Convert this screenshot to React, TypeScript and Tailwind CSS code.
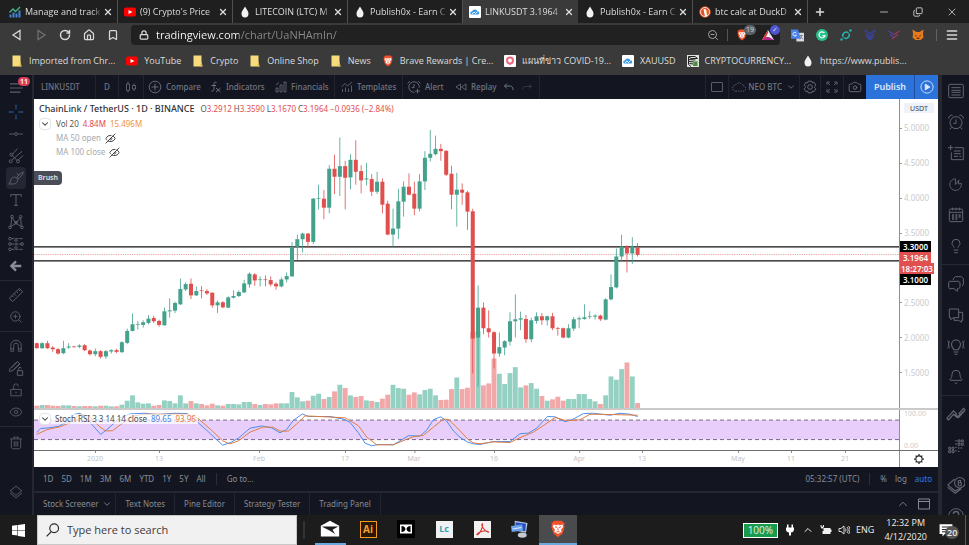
import type { ReactNode } from "react";
import {
  Bell,
  Bookmark,
  Camera,
  ChevronDown,
  ChevronUp,
  Copy,
  Eye,
  EyeOff,
  Home,
  Lightbulb,
  Lock,
  Menu,
  Minus,
  Plus,
  RotateCw,
  X,
  ZoomIn,
  ZoomOut,
} from "lucide-react";

interface IconProps {
  children: ReactNode;
  className?: string;
}

// 24 unit outline icon, coloured by the text colour around it
const Line = ({ children, className = "size-4" }: IconProps) => (
  <svg
    viewBox="0 0 24 24"
    fill="none"
    stroke="currentColor"
    strokeWidth="1.5"
    aria-hidden="true"
    className={`shrink-0 ${className}`}
  >
    {children}
  </svg>
);

const Art = ({ children, className = "size-3" }: IconProps) => (
  <svg viewBox="0 0 24 24" aria-hidden="true" className={`shrink-0 ${className}`}>
    {children}
  </svg>
);

const YouTubeIcon = () => (
  <Art>
    <rect x="0" y="3" width="24" height="18" rx="4" fill="#f00" />
    <path d="M9 8l8 4-8 4z" fill="#fff" />
  </Art>
);

const DropIcon = () => (
  <Art>
    <path d="M12 1c3 6 7 9 7 14a7 8 0 0 1-14 0c0-5 4-8 7-14z" fill="#f2f2f2" />
  </Art>
);

const CloudIcon = () => (
  <Art>
    <rect width="24" height="24" rx="2" fill="#fff" />
    <path
      d="M5 17a3 3 0 0 1 1-6 6 6 0 0 1 11-1 4 4 0 0 1 2 7z"
      fill="#3b9ae8"
    />
    <path d="M6 16l4-4 3 3 4-4" stroke="#fff" strokeWidth="1.8" fill="none" />
  </Art>
);

const FolderIcon = () => (
  <Art>
    <path d="M3 1h16v12l2 10H3z" fill="#f7dc7d" />
    <path d="M19 13l2 10h-5z" fill="#d9b84e" />
  </Art>
);

const BraveIcon = ({ className = "size-3" }: { className?: string }) => (
  <Art className={className}>
    <path
      d="M7 1h10l2 2 2 1-1 3 1 2-3 9-6 5-6-5-3-9 1-2-1-3 2-1z"
      fill="#f4502a"
    />
    <path
      d="M6 6l4 1 2-1 2 1 4-1 1 3-3 4 1 3-3 1-2 2-2-2-3-1 1-3-3-4z"
      fill="#fff"
    />
    <path d="M8 9l3 1M16 9l-3 1M12 11v3M10 15l2 1 2-1" stroke="#f4502a" strokeWidth="1.3" fill="none" />
  </Art>
);

const ChartIcon = () => (
  <Art>
    <path d="M1 17h4v6H1zM7 13h4v10H7zM13 15h4v8h-4zM19 9h4v14h-4z" fill="#3f86d8" />
    <path d="M1 13l7-7 5 5 9-9" stroke="#42b883" strokeWidth="2.5" fill="none" />
  </Art>
);

const DuckIcon = () => (
  <Art>
    <circle cx="12" cy="12" r="11.5" fill="#e0532c" />
    <circle cx="12" cy="12" r="9" fill="none" stroke="#fff" strokeWidth="1.5" />
    <path d="M9 6c4-1 7 2 6 6l1 8-4 1z" fill="#fff" />
    <path d="M13 11l5 1-4 2z" fill="#fdd20a" />
  </Art>
);

const tabs = [
  { title: "Manage and track", icon: <ChartIcon /> },
  { title: "(9) Crypto's Price", icon: <YouTubeIcon /> },
  { title: "LITECOIN (LTC) M", icon: <DropIcon /> },
  { title: "Publish0x - Earn C", icon: <DropIcon /> },
  { title: "LINKUSDT 3.1964", icon: <CloudIcon />, active: true },
  { title: "Publish0x - Earn C", icon: <DropIcon /> },
  { title: "btc calc at DuckD", icon: <DuckIcon /> },
];

const TabBar = () => (
  <header className="flex h-[23px] shrink-0 items-stretch bg-[#1f1f1f] pl-[3px] text-[#dedede]">
    {tabs.map((tab, i) => (
      <div
        key={i}
        className={`flex w-[115px] items-center pr-1 pl-1.5 ${
          tab.active ? "bg-[#3a3a3a]" : "border-r border-[#505050]"
        }`}
      >
        {tab.icon}
        <span className="ml-1 min-w-0 flex-1 mask-r-from-85% text-[9px] whitespace-nowrap">
          {tab.title}
        </span>
        <button aria-label="Close tab">
          <X className="size-2.5" strokeWidth={3} />
        </button>
      </div>
    ))}
    <button aria-label="New tab" className="px-1.5">
      <Plus className="size-3" strokeWidth={3} />
    </button>
    <div className="ml-auto flex items-center gap-[23px] pr-[11px]">
      <button aria-label="Minimize">
        <Minus className="size-3" strokeWidth={1.5} />
      </button>
      <button aria-label="Restore">
        <Copy className="size-2.5 -scale-x-100 rotate-180" strokeWidth={2} />
      </button>
      <button aria-label="Close">
        <X className="size-3" strokeWidth={1.5} />
      </button>
    </div>
  </header>
);

const AddressBar = () => (
  <div className="flex h-6 shrink-0 items-center bg-[#3a3a3a] text-[#d8d8d8]">
    <div className="flex w-[131px] items-center gap-3 pl-[11px]">
      <button aria-label="Back">
        <Line className="size-3">
          <path d="M18 3v18L4 12z" strokeWidth="2.5" />
        </Line>
      </button>
      <button aria-label="Forward" className="text-[#707070]">
        <Line className="size-3">
          <path d="M6 3v18l14-9z" strokeWidth="2.5" />
        </Line>
      </button>
      <button aria-label="Reload">
        <RotateCw className="size-3" strokeWidth={3} />
      </button>
      <button aria-label="Home">
        <Home className="size-3" strokeWidth={2.5} />
      </button>
      <button aria-label="Bookmark this page">
        <Bookmark className="size-3" strokeWidth={2.5} />
      </button>
    </div>
    <div className="flex h-5 min-w-0 flex-1 items-center rounded-sm bg-[#212121] pl-2">
      <Lock className="size-2.5 shrink-0" strokeWidth={3} />
      <input
        aria-label="Address"
        defaultValue="tradingview.com/chart/UaNHAmIn/"
        className="ml-[7px] min-w-0 flex-1 bg-[linear-gradient(to_right,#ffffff_83px,#8c8c8c_83px)] bg-clip-text text-[11px] text-transparent outline-none"
      />
      <button aria-label="Zoom">
        <ZoomOut className="size-3 text-[#a0a0a0]" />
      </button>
      <span className="mx-2 h-3 w-px bg-[#555]" />
      <button aria-label="Brave shields" className="relative flex w-[26px] items-center">
        <BraveIcon />
        <span className="absolute top-[-4px] left-2 rounded-full bg-[#5c6068] px-0.5 text-[7px] leading-[10px]">
          19
        </span>
      </button>
      <button aria-label="Brave rewards" className="relative flex w-[18px] items-center">
        <Art>
          <path d="M12 2l12 20H0z" fill="#e8e4ee" />
          <path d="M12 2L0 22l12-6z" fill="#e5342a" />
          <path d="M0 22h24l-12-7z" fill="#b0248c" />
          <path d="M12 8l4 8H8z" fill="#fff" />
        </Art>
        <span className="absolute top-[-4px] left-2 size-2.5 rounded-full bg-[#4c54d2] text-[7px] leading-[10px]">
          ✓
        </span>
      </button>
    </div>
    <div className="flex items-center gap-3 pr-2.5 pl-[11px]">
      <button aria-label="Translate">
        <Art className="size-[13px]">
          <rect x="10" y="7" width="14" height="16" fill="#d8dce2" />
          <path d="M0 1h13l5 17H0z" fill="#4a80e8" />
          <path d="M10 7.500a3.500 3.500 0 1 0 0 4H7" stroke="#fff" strokeWidth="1.500" fill="none" />
          <path d="M16 12h6M19 11c0 4-1 6-3 8M18 14l4 5" stroke="#667" strokeWidth="1.300" fill="none" />
        </Art>
      </button>
      <button aria-label="Grammar">
        <Art>
          <circle cx="12" cy="12" r="12" fill="#27c08a" />
          <path d="M17 8a6 6 0 1 0 1 5h-5" stroke="#fff" strokeWidth="2.500" fill="none" />
        </Art>
      </button>
      <button aria-label="Wallet">
        <Art>
          <path d="M6 16a7 7 0 0 1 11-8M18 9a7 7 0 0 1-11 8" stroke="#2ab0ac" strokeWidth="3" fill="none" />
          <circle cx="21" cy="3" r="2.500" fill="#2ab0ac" />
          <circle cx="3" cy="21" r="2.500" fill="#2ab0ac" />
        </Art>
      </button>
      <button aria-label="Blue wallet">
        <Art>
          <path d="M1 2l11 8 11-8M3 9l9 7 9-7M5 15l7 6 7-6" stroke="#3a43a8" strokeWidth="2.800" fill="none" />
        </Art>
      </button>
      <button aria-label="Pink wallet">
        <Art>
          <path d="M1 4l11 7M4 11l8 6" stroke="#4648a5" strokeWidth="2.500" fill="none" />
          <path d="M23 4l-11 7M20 11l-8 6-4 3" stroke="#a43560" strokeWidth="2.500" fill="none" />
        </Art>
      </button>
      <button aria-label="Fox wallet">
        <Art>
          <path d="M1 1l8 5h6l8-5-1 9 1 7-6 5H7l-6-5 1-7z" fill="#e87a1e" />
          <path d="M5 12l4 1v3zM19 12l-4 1v3zM9 20h6l-1-3h-4z" fill="#5b3216" />
        </Art>
      </button>
      <span className="-mr-1 h-3 w-px bg-[#606060]" />
      <button aria-label="Menu">
        <Menu className="size-3.5" strokeWidth={2.5} />
      </button>
    </div>
  </div>
);

const bookmarks = [
  { label: "Imported from Chr...", icon: <FolderIcon /> },
  { label: "YouTube", icon: <YouTubeIcon /> },
  { label: "Crypto", icon: <FolderIcon /> },
  { label: "Online Shop", icon: <FolderIcon /> },
  { label: "News", icon: <FolderIcon /> },
  { label: "Brave Rewards | Cre...", icon: <BraveIcon /> },
  {
    label: "แผนที่ข่าว COVID-19...",
    icon: (
      <Art>
        <rect width="24" height="24" rx="2" fill="#fff" />
        <circle cx="12" cy="11" r="6" fill="none" stroke="#ea6a84" strokeWidth="4" />
        <path d="M9 16l3 5 3-5z" fill="#ea6a84" />
      </Art>
    ),
  },
  { label: "XAUUSD", icon: <CloudIcon /> },
  {
    label: "CRYPTOCURRENCY...",
    icon: (
      <Art>
        <rect width="24" height="24" fill="#dfe5dc" />
        <path d="M3 3h13l5 4H8zM3 9l14 1M4 13l11 1M5 17l8 1M3 4v15l5 4" stroke="#222" strokeWidth="2" fill="none" />
        <path d="M14 14l7-2v10h-9z" fill="#4c8a3f" />
      </Art>
    ),
  },
  { label: "https://www.publis...", icon: <DropIcon /> },
];

const BookmarksBar = () => (
  <nav className="flex h-7 shrink-0 items-center gap-[11px] bg-[#3a3a3a] px-[11px] text-[9px] whitespace-nowrap text-[#dcdcdc]">
    {bookmarks.map((b) => (
      <a key={b.label} href="#" className="flex items-center gap-1.5">
        {b.icon}
        {b.label}
      </a>
    ))}
  </nav>
);

const Rule = () => <span className="w-px self-stretch bg-[#22252f]" />;

const ChartToolbar = () => (
  <div className="flex h-6 shrink-0 items-center bg-[#131621] text-[8px] font-medium whitespace-nowrap text-[#71757f]">
    <button className="w-[61px] pl-[7px] text-left">LINKUSDT</button>
    <Rule />
    <button className="w-[22px]">D</button>
    <Rule />
    <button aria-label="Candles" className="flex w-6 justify-center">
      <Line className="size-3">
        <path d="M3 6h6v13H3zM6 1v5M6 19v4M15 9h6v7h-6zM18 5v4M18 16v4" />
      </Line>
    </button>
    <Rule />
    <button className="flex w-[62px] items-center gap-1 pl-1">
      <Line className="size-3.5">
        <circle cx="12" cy="12" r="10" />
        <path d="M12 6v12M6 12h12" />
      </Line>
      Compare
    </button>
    <button className="flex w-[65px] items-center gap-1 pl-1">
      <Line className="size-3">
        <path d="M13 3c-5-2-5 2-5 8s0 10-5 9M3 9h9M12 14l9 8M21 14l-9 8" strokeWidth="2" />
      </Line>
      Indicators
    </button>
    <button className="flex w-[63px] items-center gap-1 pl-1">
      <Line className="size-3">
        <path d="M2 14h4v8H2zM10 8h4v14h-4zM18 2h4v20h-4zM2 8l6-5" />
      </Line>
      Financials
    </button>
    <Rule />
    <button className="flex w-[67px] items-center gap-1 pl-1.5">
      <Line className="size-3">
        <path d="M1 12l7-7 5 5 9-8M3 22v-6M9 22v-9M15 22v-7M21 22V9" />
      </Line>
      Templates
    </button>
    <Rule />
    <button className="flex w-12 items-center gap-1 pl-1">
      <Line className="size-3.5">
        <path d="M13 21a9 9 0 1 1 8-8M12 7v6H8M1 6l4-4M19 2l4 4M18 15v8M14 19h8" />
      </Line>
      Alert
    </button>
    <button className="flex w-12 items-center gap-1 pl-1">
      <Line className="size-3">
        <path d="M11 6v12l-9-6zM22 6v12l-9-6z" />
      </Line>
      Replay
    </button>
    <button aria-label="Undo" className="ml-1">
      <Line className="size-3">
        <path d="M8 5L3 10l5 5M3 10h11c4 0 6 3 6 8" strokeWidth="2" />
      </Line>
    </button>
    <button aria-label="Redo" className="mx-1.5 text-[#343843]">
      <Line className="size-3">
        <path d="M16 7l5 4-5 4M21 11H9c-4 0-6 2-6 5" strokeWidth="2" />
      </Line>
    </button>
    <Rule />
    <div className="ml-auto flex items-center self-stretch">
      <Rule />
      <button aria-label="Layout" className="px-[5px]">
        <Line className="size-3">
          <rect x="1" y="3" width="22" height="18" rx="1" />
        </Line>
      </button>
      <Rule />
      <button className="flex items-center gap-0.5 px-[3px]">
        <Line className="size-3.5">
          <path d="M6 19a5 5 0 0 1 0-10 7 7 0 0 1 13 1 4 4 0 0 1 0 9z" strokeDasharray="2 2" />
        </Line>
        NEO BTC
        <ChevronDown className="ml-0.5 size-2.5" />
      </button>
      <Rule />
      <button aria-label="Settings" className="px-[3px]">
        <Line className="size-3.5">
          <path d="M9 2h6l1 3 3-1 3 5-2 2v2l2 2-3 5-3-1-1 3H9l-1-3-3 1-3-5 2-2v-2L2 9l3-5 3 1z" strokeLinejoin="round" />
          <circle cx="12" cy="12" r="4" />
        </Line>
      </button>
      <Rule />
      <button aria-label="Fullscreen" className="px-[5px]">
        <Line className="size-3">
          <path d="M2 8V2h6M16 2h6v6M22 16v6h-6M8 22H2v-6M3 3l5 5M21 3l-5 5M21 21l-5-5M3 21l5-5" />
        </Line>
      </button>
      <Rule />
      <button aria-label="Snapshot" className="px-1">
        <Camera className="size-3.5" strokeWidth={1.5} />
      </button>
      <button className="flex w-12 items-center justify-center self-stretch bg-[#2b72da] text-[9px] font-semibold text-[#dfe9fa]">
        Publish
      </button>
      <button
        aria-label="Go live"
        className="flex w-6 items-center justify-center self-stretch border-l border-[#1d4f9c] bg-[#2b72da] text-[#dfe9fa]"
      >
        <Line className="size-3.5">
          <circle cx="12" cy="12" r="10.5" />
          <path d="M9 7l8 5-8 5z" fill="currentColor" />
        </Line>
      </button>
    </div>
  </div>
);

const drawingTools = [
  {
    name: "Cross",
    icon: (
      <Line className="size-4 text-[#274b86]">
        <path d="M12 1v7M12 16v7M1 12h7M16 12h7" strokeWidth="2" />
      </Line>
    ),
  },
  {
    name: "Trend line",
    icon: (
      <Line className="size-3.5">
        <path d="M0 12h9M15 12h9" />
        <circle cx="12" cy="12" r="2.5" />
      </Line>
    ),
  },
  {
    name: "Pitchfork",
    icon: (
      <Line>
        <path d="M6 18L21 5M6 10L14 1M15 18L23 11M6 11l8 8" />
        <circle cx="4" cy="20" r="2.2" />
        <circle cx="5" cy="10" r="2.2" />
        <circle cx="15" cy="20" r="2.2" />
      </Line>
    ),
  },
  {
    name: "Brush",
    active: true,
    icon: (
      <Line>
        <path d="M1 21c3-1 2-5 4-8s7-3 9 0-1 8-6 8zM13 12c2-4 6-8 10-9-1 4-4 8-9 11M13 5l4 3" />
      </Line>
    ),
  },
  {
    name: "Text",
    icon: (
      <Line>
        <path d="M4 7V4h16v3M12 4v16M9 20h6" />
      </Line>
    ),
  },
  {
    name: "Patterns",
    icon: (
      <Line>
        <path d="M4 19L6 5l6 9 7-9 1 14-8-5-8 5" />
        <circle cx="6" cy="4" r="2" />
        <circle cx="19" cy="4" r="2" />
        <circle cx="3" cy="20" r="2" />
        <circle cx="21" cy="20" r="2" />
        <circle cx="12" cy="13" r="2" />
      </Line>
    ),
  },
  {
    name: "Forecast",
    icon: (
      <Line>
        <path d="M5 4h17M5 20h17M5 12h15M12 5v14M9 8l3-3 3 3M9 16l3 3 3-3" strokeDasharray="5 1" />
        <circle cx="3" cy="4" r="2" />
        <circle cx="3" cy="12" r="2" />
        <circle cx="3" cy="20" r="2" />
        <circle cx="21" cy="12" r="2" />
      </Line>
    ),
  },
  {
    name: "Arrow",
    icon: (
      <Line className="size-3.5 text-[#8b8e98]">
        <path d="M12 4l-8 8 8 8M4 12h17" strokeWidth="4" />
      </Line>
    ),
  },
];

const viewTools = [
  {
    name: "Measure",
    icon: (
      <Line>
        <path d="M2 17L17 2l5 5L7 22zM6 13l2 2M9 10l3 3M13 7l2 2M16 4l2 2" />
      </Line>
    ),
  },
  { name: "Zoom in", icon: <ZoomIn className="size-3.5" strokeWidth={1.5} /> },
];

const lockTools = [
  {
    name: "Magnet",
    icon: (
      <Line className="size-3.5">
        <path d="M3 21V11a9 9 0 0 1 18 0v10h-5V11a4 4 0 0 0-8 0v10zM3 17h5M16 17h5" />
      </Line>
    ),
  },
  {
    name: "Stay in drawing mode",
    icon: (
      <Line>
        <path d="M2 17l1-4L14 2l4 4L8 15l-4 2zM5 12l9-9M8 15l9-9M14 16h8v7h-8zM16 16v-3a2 2 0 0 1 4 0" />
      </Line>
    ),
  },
  {
    name: "Lock drawings",
    icon: (
      <Line className="size-3.5">
        <path d="M3 11h18v11H3zM8 11V6a4 4 0 0 1 8-1v1M12 15v3" />
      </Line>
    ),
  },
  { name: "Hide drawings", icon: <Eye className="size-3.5" strokeWidth={1.5} /> },
];

interface Tool {
  name: string;
  icon: ReactNode;
  active?: boolean;
}

const ToolGroup = ({ tools }: { tools: Tool[] }) => (
  <div className="flex flex-col">
    {tools.map((t) => (
      <div key={t.name} className="relative">
        <button
          aria-label={t.name}
          className={`mx-1.5 flex h-[22px] w-5 items-center justify-center rounded-sm ${
            t.active ? "bg-[#242733]" : ""
          }`}
        >
          {t.icon}
        </button>
        {t.active && (
          <span className="absolute top-1 left-[34px] z-10 rounded-r-sm bg-[#4a4d55] px-1 text-[7px] leading-[14px] font-semibold text-[#e2e2e4]">
            {t.name}
          </span>
        )}
      </div>
    ))}
  </div>
);

const Divider = () => <hr className="my-[3px] border-[#272a34]" />;

const LeftBar = () => (
  <aside className="flex w-[34px] shrink-0 flex-col border-r-2 border-[#252731] bg-[#131621] text-[#5c606b]">
    <button aria-label="Main menu" className="relative flex h-[26px] items-center pl-2.5">
      <Line className="size-3.5">
        <path d="M0 5h20M0 12h22M0 19h18" strokeWidth="2" />
      </Line>
      <span className="absolute top-0.5 left-[18px] rounded-full bg-[#dc3d5c] px-0.5 text-[7px] leading-[9px] font-semibold text-white">
        11
      </span>
    </button>
    <ToolGroup tools={drawingTools} />
    <Divider />
    <ToolGroup tools={viewTools} />
    <Divider />
    <ToolGroup tools={lockTools} />
    <Divider />
    <button aria-label="Remove drawings" className="mt-0.5 flex h-[22px] w-8 items-center justify-center">
      <Line className="size-3.5">
        <path d="M2 5h20M8 5V2h8v3M4 5v15l2 2h12l2-2V5M9 9v9M12 9v9M15 9v9" />
      </Line>
    </button>
    <button aria-label="Object tree" className="mt-auto mb-3 flex h-[22px] w-8 items-center justify-center">
      <Line className="size-3.5">
        <path d="M12 2l10 8-10 8-10-8zM2 14l10 8 10-8" />
      </Line>
    </button>
  </aside>
);

const railTop = [
  {
    name: "Watchlist",
    icon: (
      <Line>
        <rect x="1" y="2" width="22" height="20" rx="2" />
        <path d="M5 7h14M5 11h14M5 14h14M5 18h14" />
      </Line>
    ),
  },
  {
    name: "Alerts",
    icon: (
      <Line>
        <circle cx="12" cy="13" r="9" />
        <path d="M12 8v6H8M1 7c0-4 3-6 6-5M23 7c0-4-3-6-6-5M5 20l-2 3M19 20l2 3" />
      </Line>
    ),
  },
  {
    name: "News",
    icon: (
      <Line>
        <path d="M10 4h13v18H5V11M9 9h10M9 13h10M9 17h6M17 17h3M4 0v8M0 4h8" />
      </Line>
    ),
  },
  {
    name: "Hotlists",
    icon: (
      <Line className="size-3.5">
        <path d="M11 3a10 10 0 1 0 10 8l-5 1 1-7-6 8z" />
      </Line>
    ),
  },
  {
    name: "Calendar",
    icon: (
      <Line>
        <rect x="2" y="3" width="20" height="19" rx="2" />
        <path d="M2 8h20M7 1v4M12 1v4M17 1v4" />
        <path d="M6 12h3M11 12h3M16 12h3M6 15h3M11 15h3M16 15h3M6 18h3M11 18h3" strokeWidth="2" />
      </Line>
    ),
  },
  { name: "Ideas", icon: <Lightbulb className="size-4" strokeWidth={1.5} /> },
];

const railMiddle = [
  {
    name: "Public chats",
    icon: (
      <Line>
        <path d="M8 6V4l3-3h9l3 3v9l-2 2M2 8h14l2 2v7l-2 2h-2v4l-5-4H2l-1-2v-7z" />
      </Line>
    ),
  },
  {
    name: "Private chats",
    icon: (
      <Line>
        <path d="M2 3h14v13H8l-4 3v-3H2zM16 8h6v12h-2v3l-4-3h-7v-4" />
      </Line>
    ),
  },
  {
    name: "Ideas stream",
    icon: (
      <Line className="size-[18px]">
        <path d="M9 17c0-2-3-3-3-7a6 6 0 0 1 12 0c0 4-3 5-3 7zM9 20h6M10 23h4M3 5c-1 3-1 7 0 10M0 4c-1 4-1 9 0 12M21 5c1 3 1 7 0 10M24 4c1 4 1 9 0 12" />
      </Line>
    ),
  },
  { name: "Notifications", icon: <Bell className="size-4" strokeWidth={1.5} /> },
];

const railBottom = [
  {
    name: "Order panel",
    icon: (
      <Line className="size-5">
        <path d="M1 16l8-9 4 4M3 18l6-7 4 4 10-9M11 11l4 4 8-9M15 15l-2-2M1 16l2 2M23 6l-2-2-6 7" strokeWidth="1.5" />
      </Line>
    ),
  },
  {
    name: "Depth of market",
    icon: (
      <Line>
        <path d="M15 3h3v3h-3zM20 3h3v3h-3zM15 8h3v3h-3zM20 8h3v3h-3zM1 14h3v3H1zM6 14h3v3H6zM1 19h3v3H1zM6 19h3v3H6z" />
        <path d="M12 3v20" strokeWidth="2" strokeDasharray="2 3" />
        <path d="M15 15h8M15 20h4" strokeWidth="2" strokeDasharray="2 2" />
      </Line>
    ),
  },
];

const railHelp = [
  {
    name: "Crypto screener",
    icon: (
      <Line className="size-[18px]">
        <circle cx="17" cy="9" r="7" />
        <path d="M10 4L1 12l10 8 7-4M1 15l10 8 8-6M15 6v7M15 6h3v3h-3M15 9h4v4h-4" />
      </Line>
    ),
  },
  {
    name: "Help",
    icon: (
      <Line>
        <circle cx="12" cy="12" r="11" />
        <path d="M8 9c0-5 8-5 8 0 0 3-4 3-4 6M12 17v2" strokeWidth="2" />
      </Line>
    ),
  },
];

const RailGroup = ({ tools }: { tools: Tool[] }) => (
  <div className="flex flex-col">
    {tools.map((t) => (
      <button key={t.name} aria-label={t.name} className="flex h-[31px] items-center justify-center">
        {t.icon}
      </button>
    ))}
  </div>
);

const RightRail = () => (
  <aside className="flex w-[31px] shrink-0 flex-col overflow-hidden border-l-4 border-[#252731] bg-[#131621] text-[#626671]">
    <RailGroup tools={railTop} />
    <Divider />
    <RailGroup tools={railMiddle} />
    <Divider />
    <RailGroup tools={railBottom} />
    <div className="h-2 shrink-0" />
    <RailGroup tools={railHelp} />
  </aside>
);

// up?, body top, body bottom, wick top, wick bottom, volume
const candles = [
  [0, 735, 750, 733, 751, 7],
  [1, 735, 750, 732, 752, 9],
  [0, 735, 750, 728, 752, 9],
  [0, 748, 753, 744, 761, 7],
  [0, 753, 766, 750, 769, 6],
  [1, 750, 765, 728, 768, 8],
  [1, 745, 748, 735, 752, 8],
  [0, 745, 747, 743, 748, 6],
  [1, 742, 746, 738, 750, 5],
  [0, 741, 756, 738, 759, 6],
  [0, 757, 768, 754, 772, 6],
  [1, 759, 768, 751, 774, 5],
  [0, 759, 776, 756, 781, 7],
  [1, 759, 775, 756, 782, 7],
  [1, 756, 760, 753, 766, 5],
  [0, 756, 761, 752, 765, 5],
  [1, 732, 762, 729, 764, 10],
  [1, 698, 734, 691, 738, 22],
  [1, 678, 698, 646, 700, 38],
  [1, 677, 679, 668, 694, 17],
  [1, 672, 680, 666, 688, 13],
  [1, 661, 674, 650, 678, 14],
  [0, 659, 669, 652, 674, 7],
  [0, 668, 680, 664, 685, 9],
  [1, 639, 681, 628, 682, 23],
  [1, 636, 639, 600, 658, 21],
  [1, 614, 637, 610, 644, 14],
  [1, 572, 618, 540, 620, 38],
  [1, 557, 573, 552, 578, 14],
  [0, 556, 591, 540, 602, 21],
  [1, 578, 591, 564, 593, 14],
  [0, 576, 578, 563, 600, 12],
  [0, 578, 585, 572, 590, 8],
  [0, 583, 621, 582, 628, 13],
  [1, 612, 621, 606, 644, 8],
  [0, 612, 627, 608, 630, 7],
  [1, 597, 628, 594, 629, 12],
  [1, 593, 598, 576, 600, 12],
  [1, 581, 593, 576, 596, 11],
  [1, 555, 582, 544, 584, 18],
  [1, 526, 558, 522, 568, 18],
  [0, 528, 546, 524, 562, 12],
  [1, 543, 545, 534, 564, 9],
  [0, 543, 545, 531, 564, 12],
  [0, 545, 558, 534, 564, 11],
  [0, 556, 564, 551, 574, 14],
  [1, 543, 564, 537, 567, 14],
  [1, 533, 543, 522, 552, 14],
  [1, 445, 534, 431, 534, 48],
  [1, 422, 445, 408, 484, 32],
  [1, 405, 422, 402, 462, 20],
  [0, 405, 430, 403, 448, 22],
  [1, 300, 430, 298, 436, 37],
  [1, 299, 301, 258, 332, 43],
  [0, 300, 327, 274, 362, 27],
  [1, 210, 327, 199, 344, 33],
  [0, 210, 234, 168, 286, 50],
  [1, 202, 234, 116, 292, 70],
  [0, 202, 237, 186, 332, 60],
  [1, 183, 236, 166, 272, 38],
  [0, 183, 219, 124, 258, 33],
  [0, 217, 245, 199, 284, 36],
  [1, 239, 242, 192, 260, 23],
  [0, 241, 279, 226, 292, 21],
  [1, 249, 279, 219, 286, 18],
  [0, 249, 318, 239, 344, 28],
  [0, 315, 408, 306, 410, 40],
  [1, 390, 408, 330, 444, 70],
  [1, 308, 390, 270, 422, 60],
  [1, 264, 309, 248, 354, 58],
  [0, 264, 288, 224, 290, 40],
  [0, 285, 330, 249, 350, 47],
  [1, 248, 330, 226, 338, 41],
  [1, 177, 248, 157, 274, 54],
  [1, 165, 177, 93, 188, 58],
  [1, 150, 166, 110, 170, 38],
  [0, 150, 157, 135, 186, 24],
  [0, 156, 228, 154, 232, 25],
  [0, 225, 288, 201, 332, 57],
  [1, 273, 288, 222, 384, 92],
  [0, 273, 282, 254, 318, 57],
  [0, 281, 339, 276, 394, 61],
  [0, 338, 721, 330, 826, 230],
  [1, 628, 718, 561, 866, 230],
  [0, 628, 690, 612, 708, 68],
  [0, 690, 702, 636, 718, 74],
  [0, 702, 766, 699, 811, 149],
  [1, 747, 766, 703, 776, 103],
  [1, 729, 748, 726, 771, 72],
  [1, 669, 730, 642, 742, 105],
  [1, 663, 669, 588, 718, 123],
  [1, 660, 664, 640, 696, 62],
  [0, 662, 723, 650, 734, 68],
  [1, 666, 723, 658, 732, 75],
  [1, 654, 668, 642, 676, 58],
  [0, 654, 666, 644, 680, 36],
  [1, 654, 666, 652, 682, 22],
  [0, 654, 690, 644, 696, 26],
  [0, 690, 692, 686, 712, 34],
  [0, 690, 718, 688, 720, 22],
  [1, 690, 718, 678, 720, 27],
  [1, 663, 691, 656, 698, 27],
  [1, 660, 663, 654, 690, 42],
  [1, 657, 662, 618, 664, 42],
  [1, 654, 656, 639, 662, 27],
  [1, 652, 655, 648, 664, 20],
  [0, 652, 663, 649, 668, 12],
  [1, 603, 664, 600, 666, 38],
  [1, 566, 603, 528, 606, 95],
  [1, 474, 567, 450, 570, 85],
  [1, 444, 474, 408, 488, 117],
  [0, 444, 465, 440, 522, 137],
  [1, 444, 465, 416, 496, 95],
  [0, 447, 469, 434, 474, 15],
];

const candleX = (i: number) => 8.4 + i * 15.95;

const stochK =
  "8,69 20,57 45,55 75,50 100,35 120,14 135,10 150,16 170,40 200,75 225,55 250,30 270,18 290,12 330,10 370,14 420,10 460,11 480,28 520,64 540,84 566,108 588,101 614,86 648,56 683,49 713,55 738,70 758,60 778,32 805,12 823,20 888,20 928,28 948,38 973,70 993,102 1013,110 1033,106 1078,107 1103,92 1123,79 1158,80 1178,62 1198,30 1220,21 1238,34 1258,64 1278,84 1300,98 1318,104 1338,106 1378,97 1428,97 1458,73 1483,71 1508,56 1540,20 1563,21 1593,36 1618,28 1648,11 1678,10 1728,16 1758,10 1788,13 1811,20";

const stochD =
  "8,75 40,60 80,51 110,38 135,14 165,18 195,50 215,64 235,64 260,45 290,20 330,13 460,13 490,24 530,60 566,95 588,104 613,95 648,68 688,52 718,53 738,65 763,65 788,43 813,18 933,24 973,48 998,83 1028,107 1078,107 1118,90 1138,82 1168,78 1198,53 1228,28 1243,29 1268,53 1303,91 1318,101 1338,104 1378,98 1428,100 1458,85 1498,68 1528,48 1563,23 1598,33 1638,30 1668,13 1738,14 1811,16";

const PricePlot = () => (
  <svg
    viewBox="0 0 2595 930"
    preserveAspectRatio="none"
    role="img"
    aria-label="LINKUSDT daily candles"
    className="absolute inset-0 size-full"
  >
    {candles.map(([up, , , , , vol], i) => (
      <rect
        key={i}
        x={candleX(i) - 7.3}
        y={930 - vol}
        width="14.6"
        height={vol}
        fill={up ? "#95d1c3" : "#f2a8a8"}
      />
    ))}
    <path d="M0 445H2595M0 487H2595" stroke="#111" strokeWidth="4" />
    <path d="M0 468H2595" stroke="#ee9aa0" strokeWidth="2.5" strokeDasharray="4 3" />
    {candles.map(([up, top, bottom, high, low], i) => (
      <g key={i} fill={up ? "#43a18c" : "#de4f4e"}>
        <rect x={candleX(i) - 1.2} y={high} width="2.4" height={low - high} />
        <rect x={candleX(i) - 6} y={top} width="12" height={bottom - top} />
      </g>
    ))}
  </svg>
);

const StochPlot = () => (
  <svg
    viewBox="0 0 2595 123"
    preserveAspectRatio="none"
    role="img"
    aria-label="Stochastic RSI"
    className="absolute inset-0 size-full"
  >
    <rect y="31" width="2595" height="60" fill="#e8cffb" />
    <path d="M0 31H2595M0 91H2595" stroke="#77667f" strokeWidth="3" strokeDasharray="12 9" />
    <polyline points={stochK} fill="none" stroke="#4a8df0" strokeWidth="3" />
    <polyline points={stochD} fill="none" stroke="#e07b3c" strokeWidth="3" />
  </svg>
);

const Collapse = () => (
  <button
    aria-label="Collapse"
    className="flex size-3 items-center justify-center rounded-sm border border-[#e2e4ea] bg-white text-[#333]"
  >
    <ChevronDown className="size-2.5" strokeWidth={2.5} />
  </button>
);

const ohlc = [
  ["O", "3.2912"],
  ["H", "3.3590"],
  ["L", "3.1670"],
  ["C", "3.1964"],
];

const Legend = () => (
  <div className="absolute top-0.5 left-[5px] text-[8px] whitespace-nowrap text-[#555]">
    <div className="flex h-[15px] items-center gap-1.5">
      <h1 className="text-[9px] font-medium text-[#2f3136]">ChainLink / TetherUS · 1D · BINANCE</h1>
      <p className="flex gap-0.5">
        {ohlc.map(([k, v]) => (
          <span key={k}>
            {k}
            <span className="text-[#e0504f]">{v}</span>
          </span>
        ))}
        <span className="text-[#e0504f]">−0.0936 (−2.84%)</span>
      </p>
    </div>
    <div className="flex h-[15px] items-center">
      <Collapse />
      <span className="ml-[5px]">Vol 20</span>
      <span className="ml-1 text-[#e8484f]">4.84M</span>
      <span className="ml-1 text-[#f2933c]">15.496M</span>
    </div>
    {["MA 50 open", "MA 100 close"].map((name) => (
      <div key={name} className="flex h-[14px] items-center gap-1 pl-[17px] text-[#a9a9ab]">
        {name}
        <button aria-label={`Show ${name}`}>
          <EyeOff className="size-[11px] -scale-x-100 text-[#3a3a3a]" />
        </button>
      </div>
    ))}
  </div>
);

const prices = ["5.0000", "4.5000", "4.0000", "3.5000", "", "2.5000", "2.0000", "1.5000"];

const dates = [
  { label: "2020", at: 61 },
  { label: "13", at: 125 },
  { label: "Feb", at: 225 },
  { label: "17", at: 311 },
  { label: "Mar", at: 380 },
  { label: "16", at: 460 },
  { label: "Apr", at: 545 },
  { label: "13", at: 608 },
  { label: "May", at: 704 },
  { label: "11", at: 757 },
  { label: "21", at: 811 },
];

const Chart = () => (
  <div className="flex min-h-0 flex-1 flex-col bg-white text-[8px]">
    <div className="flex min-h-0 flex-1 border-b-2 border-[#c9c9c9]">
      <div className="relative min-w-0 flex-1">
        <PricePlot />
        <Legend />
      </div>
      <div className="relative flex w-[39px] shrink-0 flex-col border-l border-[#8e8e8e] pb-[18px] leading-none text-[#cacace]">
        <button className="mx-1 mt-1 -mb-0.5 h-2.5 bg-[#eff2f9] text-[7px] text-[#3d4048]">USDT</button>
        {prices.map((p, i) => (
          <span key={i} className="flex flex-1 items-center gap-0.5">
            <i className="h-px w-0.5 bg-[#9a9a9a]" />
            {p}
          </span>
        ))}
        <div className="absolute top-[46%] left-0 flex flex-col items-start leading-[11px] font-semibold text-white">
          <span className="bg-black px-[3px]">3.3000</span>
          <span className="bg-[#e0504f] px-[3px]">3.1964</span>
          <span className="bg-[#e0504f] px-px">18:27:03</span>
          <span className="bg-black px-[3px]">3.1000</span>
        </div>
      </div>
    </div>
    <div className="flex h-[41px] shrink-0 border-b border-[#6d6d6d]">
      <div className="relative min-w-0 flex-1">
        <StochPlot />
        <div className="absolute top-[3px] left-[5px] flex items-center leading-[10px] whitespace-nowrap text-[#4b4b50]">
          <Collapse />
          <p className="flex gap-1 bg-white/70 pr-0.5 pl-1">
            <span>Stoch RSI 3 3 14 14 close</span>
            <span className="text-[#3f86ea]">89.65</span>
            <span className="text-[#ee7a37]">93.96</span>
          </p>
        </div>
      </div>
      <div className="flex w-[39px] shrink-0 flex-col justify-between border-l border-[#8e8e8e] pl-1 text-[7px] leading-[8px] text-[#cacace]">
        <span>100.00</span>
        <span>0.00</span>
      </div>
    </div>
    <div className="flex h-4 shrink-0">
      <div className="relative min-w-0 flex-1 text-[7px] leading-4 text-[#c4c4c8]">
        {dates.map((d) => (
          <span
            key={d.at}
            className="absolute top-0 -translate-x-1/2 before:absolute before:top-0 before:left-1/2 before:h-0.5 before:w-px before:bg-[#8e8e8e]"
            style={{ left: `${(d.at / 865) * 100}%` }}
          >
            {d.label}
          </span>
        ))}
      </div>
      <button
        aria-label="Scale settings"
        className="flex w-[39px] shrink-0 items-center justify-center border-l border-[#8e8e8e] text-[#222]"
      >
        <Line className="size-2.5">
          <circle cx="12" cy="12" r="7.5" strokeWidth="2.5" />
          <path d="M12 0v4M12 20v4M0 12h4M20 12h4M4 4l2 2M18 18l2 2M20 4l-2 2M4 20l2-2" strokeWidth="3" />
        </Line>
      </button>
    </div>
  </div>
);

const ranges = ["1D", "5D", "1M", "3M", "6M", "YTD", "1Y", "5Y", "All"];

const RangeBar = () => (
  <div className="flex h-6 shrink-0 items-center bg-[#131621] pr-1.5 pl-[9px] text-[8px] whitespace-nowrap text-[#8a8d97]">
    <div className="flex gap-2">
      {ranges.map((r) => (
        <button key={r}>{r}</button>
      ))}
    </div>
    <span className="mx-2.5 h-3 w-px bg-[#2c2f39]" />
    <button>Go to...</button>
    <button className="ml-auto">05:32:57 (UTC)</button>
    <span className="mx-2.5 h-3 w-px bg-[#2c2f39]" />
    <button>%</button>
    <button className="ml-2">log</button>
    <button className="ml-2 text-[#2f7be8]">auto</button>
  </div>
);

const panels = ["Stock Screener", "Text Notes", "Pine Editor", "Strategy Tester", "Trading Panel"];

const PanelBar = () => (
  <div className="flex h-6 shrink-0 items-stretch border-t-2 border-[#252731] bg-[#131621] text-[8px] whitespace-nowrap text-[#878a94]">
    {panels.map((p, i) => (
      <button key={p} className="flex items-center gap-1 border-r border-[#22252f] px-[9px]">
        {p}
        {i === 0 && <ChevronDown className="-mr-1.5 size-2.5" />}
      </button>
    ))}
    <div className="ml-auto flex items-center gap-2 pr-2">
      <button aria-label="Expand panel">
        <ChevronUp className="size-3.5" strokeWidth={1.5} />
      </button>
      <button aria-label="Maximize panel">
        <Line className="size-3">
          <path d="M1 2h22v20H1zM1 7h22" strokeWidth="2" />
        </Line>
      </button>
    </div>
  </div>
);

const apps = [
  {
    name: "Mail",
    state: "open",
    icon: (
      <Art className="size-5">
        <path d="M1 8l11-6 11 6v13H1z" fill="#fff" />
        <path d="M2 9h20l-7 4 3 5-6-4z" fill="#1c1c1c" />
      </Art>
    ),
  },
  {
    name: "Illustrator",
    icon: (
      <span className="flex size-[17px] items-center justify-center border border-[#f29c26] bg-[#2b1802] text-[10px] font-bold text-[#f6a02c]">
        Ai
      </span>
    ),
  },
  {
    name: "Dolby",
    icon: (
      <Art className="size-[18px]">
        <rect width="24" height="24" fill="#000" />
        <path d="M4 6h16v12H4z" fill="#fff" />
        <path d="M6 8c7 0 7 8 0 8zM18 8c-7 0-7 8 0 8z" fill="#000" />
      </Art>
    ),
  },
  {
    name: "LC",
    icon: (
      <span className="flex size-[17px] items-center justify-center bg-[#f0f1f2] text-[9px] font-bold text-[#2fa3b6]">
        Lc
      </span>
    ),
  },
  {
    name: "Acrobat",
    icon: (
      <Art className="size-[17px]">
        <rect width="24" height="24" fill="#f3f0f0" />
        <path
          d="M12 4c-3 1 2 10 8 12 2-3-12-3-16 3 3 2 9-10 8-15z"
          fill="none"
          stroke="#d8322c"
          strokeWidth="1.500"
        />
      </Art>
    ),
  },
  {
    name: "Remote desktop",
    icon: (
      <Art className="size-[18px]">
        <ellipse cx="15" cy="20" rx="6" ry="3.500" fill="#c2cad4" />
        <path d="M5 1l17 3-2 13-15-3z" fill="#b9c9e6" />
        <path d="M6 3l14 2-1 10-13-2z" fill="#2450c0" />
        <path d="M0 8l15-2 1 8-15 2z" fill="#6ba2ea" />
        <path d="M2 12l12-2" stroke="#dfeaff" strokeWidth="1.500" />
      </Art>
    ),
  },
  { name: "Brave", state: "active", icon: <BraveIcon className="size-[18px]" /> },
];

const Taskbar = () => (
  <footer className="flex h-[30px] shrink-0 items-stretch bg-[#1c1c1c] text-[#ececec]">
    <button aria-label="Start" className="flex w-[37px] items-center justify-center">
      <Art className="size-[13px]">
        <path d="M0 3l10-1v9H0zM11 2l13-2v11H11zM0 12h10v9L0 20zM11 12h13v12l-13-2z" fill="#fff" />
      </Art>
    </button>
    <label className="flex w-[260px] items-center border border-[#c8c8c8] bg-[#f1f1f1] pl-2 text-[#2b2b2b]">
      <Line className="size-3.5">
        <circle cx="14" cy="9" r="7.5" strokeWidth="2" />
        <path d="M9 15l-8 8" strokeWidth="2" />
      </Line>
      <input
        aria-label="Search"
        placeholder="Type here to search"
        className="ml-[7px] min-w-0 flex-1 bg-transparent text-[11px] outline-none placeholder:text-[#3c3c3c]"
      />
    </label>
    <span className="mx-1.5 my-1.5 w-0.5 border-x border-[#333]" />
    {apps.map((app) => (
      <button
        key={app.name}
        aria-label={app.name}
        className={`flex w-[38px] flex-col items-center ${app.state === "active" ? "bg-[#4a4b4d]" : ""}`}
      >
        <span className="flex flex-1 items-center">{app.icon}</span>
        <span className={`h-0.5 ${app.state ? "bg-[#69a9de]" : ""} ${app.state === "active" ? "w-full" : "w-[31px]"}`} />
      </button>
    ))}
    <div className="ml-auto flex items-center gap-1.5 text-[9px]">
      <span className="border border-white bg-[#189b4b] px-1 text-[10px] leading-[13px]">100%</span>
      <Art>
        <path d="M6 1h3v6h6V1h3v6h2v4c0 4-3 6-6 6v6h-4v-6c-3 0-6-2-6-6V7h2z" fill="#fff" />
      </Art>
      <button aria-label="Show hidden icons">
        <ChevronUp className="size-3" />
      </button>
      <Art>
        <path d="M7 8h14v3h2v5h-2v4H5v-6h2zM1 2h2v3h3V2h2v3l-2 4H3L1 5z" fill="#f0f0f0" />
      </Art>
      <Line className="size-3">
        <path d="M2 9h4l6-5v16l-6-5H2zM15 9c1 2 1 4 0 6M18 6c3 4 3 8 0 12M21 4c4 5 4 11 0 16" strokeWidth="1.8" />
      </Line>
      <span>ENG</span>
      <time className="ml-1 text-center leading-[14px]">
        12:32 PM
        <br />
        4/12/2020
      </time>
      <button aria-label="Notifications" className="relative ml-1.5 h-5 w-6">
        <Art className="size-[14px]">
          <path d="M1 2h22v17H10l-4 4v-4H1z" fill="#fff" />
          <path d="M5 7h14M5 11h14M5 15h9" stroke="#222" strokeWidth="1.800" />
        </Art>
        <span className="absolute top-1.5 left-1.5 rounded-full bg-[#555] px-0.5 text-[9px] leading-[13px] font-semibold">
          20
        </span>
      </button>
      <span className="mr-[3px] -ml-1 w-px self-stretch bg-[#5a5a5a]" />
    </div>
  </footer>
);

const App = () => (
  <div className="flex h-screen flex-col overflow-hidden bg-[#131621] font-['Open_Sans','Noto_Sans',sans-serif]">
    <TabBar />
    <AddressBar />
    <BookmarksBar />
    <div className="flex min-h-0 flex-1 font-['Noto_Sans','Open_Sans',sans-serif]">
      <LeftBar />
      <main className="flex min-w-0 flex-1 flex-col">
        <ChartToolbar />
        <Chart />
        <RangeBar />
        <PanelBar />
      </main>
      <RightRail />
    </div>
    <Taskbar />
  </div>
);

export default App;
